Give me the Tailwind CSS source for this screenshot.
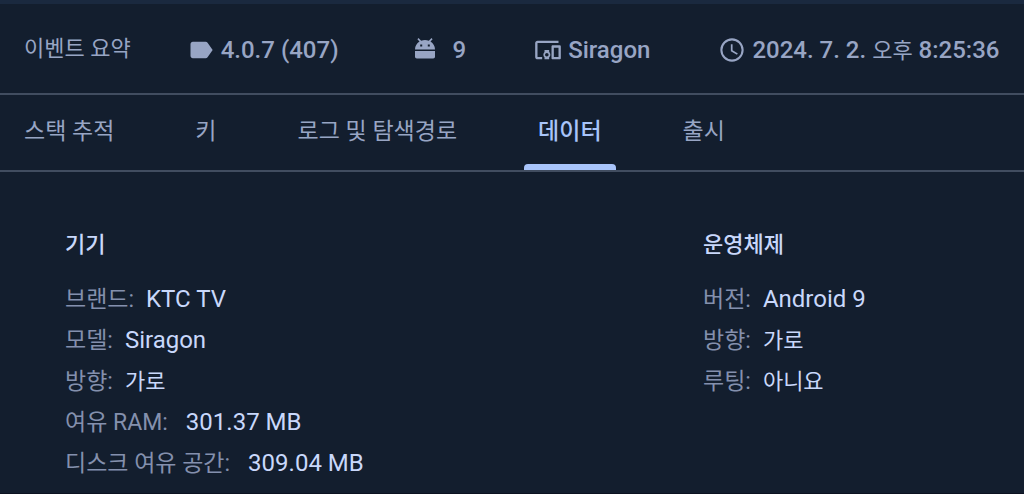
<!DOCTYPE html>
<html lang="ko">
<head>
  <meta charset="UTF-8">
  <meta name="viewport" content="width=device-width, initial-scale=1.0">
  <title>이벤트 요약</title>
  <script src="https://cdn.jsdelivr.net/npm/@tailwindcss/browser@4"></script>
</head>
<body class="bg-[#131e2e] font-[Roboto,'Noto_Sans_CJK_KR',sans-serif] text-[22px] text-[#98a5c4] whitespace-nowrap">

  <div class="min-h-screen flex flex-col border-t-4 border-t-[#1a293f] border-b border-b-[#0c1220]">

    <!-- Event summary -->
    <header class="flex items-center h-[91px] pl-6 border-b-2 border-[#414d60]">
      <h1>이벤트 요약</h1>

      <div class="flex items-center gap-1.5 ml-14 pt-0.5 text-2xl font-medium">
        <svg class="size-7" viewBox="0 0 24 24" fill="currentColor" aria-hidden="true">
          <path d="M17.63 5.84C17.27 5.33 16.67 5 16 5H5c-1.1 0-2 .9-2 2v10c0 1.1.9 2 2 2h11c.67 0 1.27-.33 1.63-.84L22 12z"/>
        </svg>
        <span>4.0.7 (407)</span>
      </div>

      <div class="flex items-center gap-3.5 ml-[72px] pt-0.5 text-2xl font-medium">
        <svg class="size-7" viewBox="0 0 28 28" fill="currentColor" aria-hidden="true">
          <path fill-rule="evenodd" d="M4 13.500c0-3.300 1.700-6.300 4.500-8L6.400 3.200l1.100-1.100 2.700 2.700a10 10 0 0 1 7.600 0l2.700-2.700 1.100 1.100-2.100 2.300c2.800 1.700 4.500 4.700 4.500 8zM9.200 8.500v2h2v-2zM16.800 8.500v2h2v-2z"/>
          <path d="M4 15h20v5.800a1.800 1.800 0 0 1-1.800 1.800H5.800A1.800 1.800 0 0 1 4 20.800z"/>
        </svg>
        <span>9</span>
      </div>

      <div class="flex items-center gap-1.5 ml-[68px] pt-0.5 text-2xl font-medium">
        <svg class="size-7" viewBox="0 0 24 24" fill="currentColor" aria-hidden="true">
          <path d="M3 6h18V4H3c-1.100 0-2 .9-2 2v12c0 1.100.9 2 2 2h4v-2H3V6zm10 6H9v1.780c-.61.55-1 1.330-1 2.220s.39 1.670 1 2.220V20h4v-1.780c.61-.55 1-1.340 1-2.220s-.39-1.670-1-2.220V12zm-2 5.500c-.83 0-1.500-.67-1.500-1.500s.67-1.500 1.500-1.500 1.500.67 1.500 1.500-.67 1.500-1.500 1.500zM22 8h-6c-.5 0-1 .5-1 1v10c0 .5.5 1 1 1h6c.5 0 1-.5 1-1V9c0-.5-.5-1-1-1zm-1 10h-4v-8h4v8z"/>
        </svg>
        <span>Siragon</span>
      </div>

      <div class="flex items-center gap-1.5 ml-[68px] pt-0.5 text-2xl font-medium">
        <svg class="size-7" viewBox="0 0 24 24" fill="currentColor" aria-hidden="true">
          <path d="M12 2C6.470 2 2 6.500 2 12s4.470 10 10 10 10-4.480 10-10S17.520 2 12 2zm0 18.200a8.200 8.200 0 1 1 0-16.400 8.200 8.200 0 0 1 0 16.400zM12.500 7H11v6l5.200 3.100.8-1.200-4.500-2.700z"/>
        </svg>
        <time datetime="2024-07-02T20:25:36">2024. 7. 2. <span class="text-[22px] font-normal">오후</span> 8:25:36</time>
      </div>
    </header>

    <!-- Tabs -->
    <nav class="flex gap-[53px] h-[77px] pl-2.5 border-b-2 border-[#414d60] text-[23px]" role="tablist">
      <button class="px-3.5" role="tab">스택 추적</button>
      <button class="px-3.5" role="tab">키</button>
      <button class="px-3.5" role="tab">로그 및 탐색경로</button>
      <button class="relative px-3.5 font-medium text-[#a8c4fa]" role="tab" aria-selected="true">
        데이터
        <span class="absolute inset-x-0 bottom-0 h-1.5 rounded-t bg-[#a8c4fa]"></span>
      </button>
      <button class="px-3.5" role="tab">출시</button>
    </nav>

    <!-- Data -->
    <main class="grow flex pt-[52px] pl-[65px]">
      <section class="w-[638px]">
        <h2 class="mb-3.5 leading-[41px] font-medium text-[#c9d8fb]">기기</h2>
        <dl class="leading-[41px]">
          <div class="flex gap-3 h-[41px]">
            <dt class="text-[23px] text-[#8490ad]">브랜드:</dt>
            <dd class="text-2xl/[41px] text-[#c9d8fb]">KTC TV</dd>
          </div>
          <div class="flex gap-3 h-[41px]">
            <dt class="text-[23px] text-[#8490ad]">모델:</dt>
            <dd class="text-2xl/[41px] text-[#c9d8fb]">Siragon</dd>
          </div>
          <div class="flex gap-3 h-[41px]">
            <dt class="text-[23px] text-[#8490ad]">방향:</dt>
            <dd class="text-[#c9d8fb]">가로</dd>
          </div>
          <div class="flex gap-[18px] h-[41px]">
            <dt class="text-[23px] text-[#8490ad]">여유 RAM:</dt>
            <dd class="text-2xl/[41px] text-[#c9d8fb]">301.37 MB</dd>
          </div>
          <div class="flex gap-[18px] h-[41px]">
            <dt class="text-[23px] text-[#8490ad]">디스크 여유 공간:</dt>
            <dd class="text-2xl/[41px] text-[#c9d8fb]">309.04 MB</dd>
          </div>
        </dl>
      </section>

      <section>
        <h2 class="mb-3.5 leading-[41px] font-medium text-[#c9d8fb]">운영체제</h2>
        <dl class="leading-[41px]">
          <div class="flex gap-3 h-[41px]">
            <dt class="text-[23px] text-[#8490ad]">버전:</dt>
            <dd class="text-2xl/[41px] text-[#c9d8fb]">Android 9</dd>
          </div>
          <div class="flex gap-3 h-[41px]">
            <dt class="text-[23px] text-[#8490ad]">방향:</dt>
            <dd class="text-[#c9d8fb]">가로</dd>
          </div>
          <div class="flex gap-3 h-[41px]">
            <dt class="text-[23px] text-[#8490ad]">루팅:</dt>
            <dd class="text-[#c9d8fb]">아니요</dd>
          </div>
        </dl>
      </section>
    </main>
  </div>

</body>
</html>
